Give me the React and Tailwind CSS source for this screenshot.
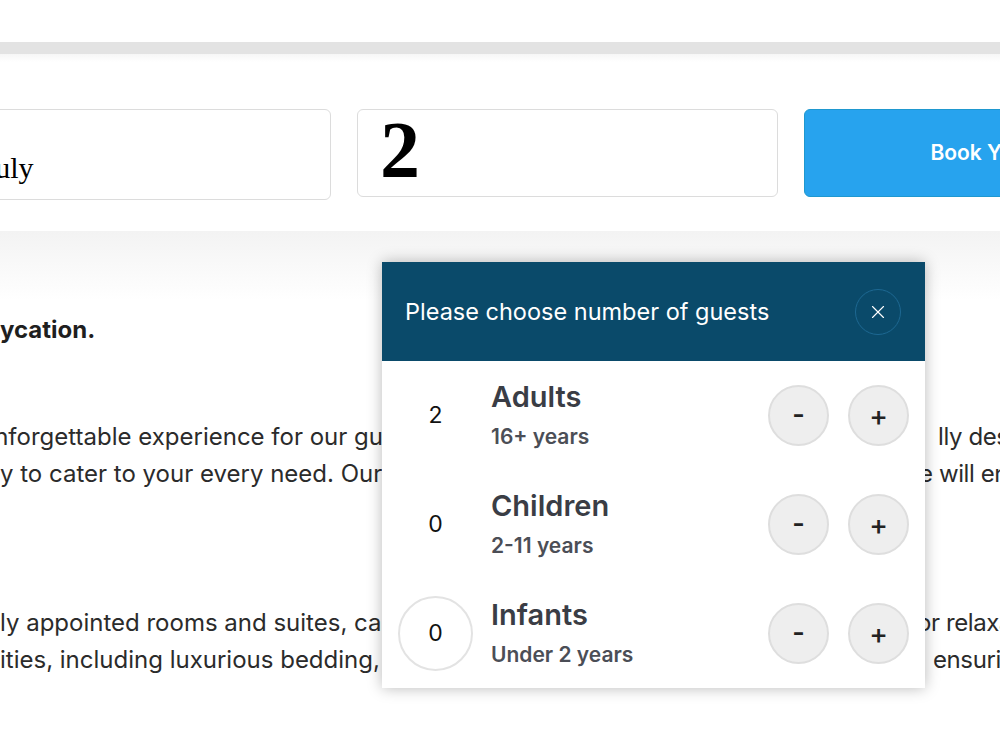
import React, { useState } from 'react';
import { X } from 'lucide-react';

const guestRows = [
    { key: 'adults', label: 'Adults', note: '16+ years' },
    { key: 'children', label: 'Children', note: '2-11 years' },
    { key: 'infants', label: 'Infants', note: 'Under 2 years' },
];

const GuestPicker = () => {
    const [counts, setCounts] = useState({ adults: 2, children: 0, infants: 0 });

    const change = (key, delta) =>
        setCounts(prev => ({ ...prev, [key]: Math.max(0, prev[key] + delta) }));

    return (
        <div className="absolute left-[382px] top-[262px] z-10 w-[543px] bg-white shadow-[0_0_14px_rgba(0,0,0,0.28)]">
            <div className="flex h-[99px] items-center justify-between bg-[#0a4a6a] pl-[23px] pr-[24px]">
                <h3 className="text-[23.5px] text-white">Please choose number of guests</h3>
                <button className="flex h-[46px] w-[46px] items-center justify-center rounded-full border border-[#1d6892] text-white">
                    <X size={22} strokeWidth={1.25} />
                </button>
            </div>

            <div>
                {guestRows.map(row => (
                    <div key={row.key} className="flex h-[109px] items-center pl-[16px] pr-[16px]">
                        <div className={`flex h-[75px] w-[75px] shrink-0 items-center justify-center rounded-full text-[23px] text-[#111] ${row.key === 'infants' ? 'border-2 border-[#e3e3e3]' : ''}`}>
                            {counts[row.key]}
                        </div>
                        <div className="ml-[18px] flex-1 pb-[2px]">
                            <div className="text-[29px] font-semibold leading-[34px] text-[#3a3d45]">{row.label}</div>
                            <div className="mt-[10px] text-[21px] font-semibold leading-[26px] text-[#4b4e56]">{row.note}</div>
                        </div>
                        <div className="flex gap-[19px]">
                            <button
                                onClick={() => change(row.key, -1)}
                                className="flex h-[61px] w-[61px] items-center justify-center rounded-full border-2 border-[#dedede] bg-[#eeeeee] text-[27px] font-semibold text-[#222]"
                            >
                                -
                            </button>
                            <button
                                onClick={() => change(row.key, 1)}
                                className="flex h-[61px] w-[61px] items-center justify-center rounded-full border-2 border-[#dedede] bg-[#eeeeee] text-[28px] font-medium text-[#222]"
                            >
                                +
                            </button>
                        </div>
                    </div>
                ))}
            </div>
        </div>
    );
};

const TextLine = ({ left, right, rightAt, cut = 0 }) => (
    <div className="flex h-[37px] items-center whitespace-nowrap">
        <div className="shrink-0 overflow-hidden" style={{ width: rightAt }}>
            <span className="block" style={{ marginLeft: -cut }}>{left}</span>
        </div>
        <span className="tracking-[-0.4px]">{right}</span>
    </div>
);

const App = () => {
    return (
        <div className="relative h-[750px] w-[1000px] overflow-hidden bg-white font-['Inter',sans-serif]">
            <div className="h-[42px] bg-white" />
            <div className="h-[12px] bg-[#e3e3e3]" />
            <div className="h-[8px] bg-gradient-to-b from-[#f6f6f6] to-white" />

            {/* booking bar */}
            <div className="flex h-[169px] items-start gap-[26px] pt-[47px] ml-[-90px]">
                <div className="flex h-[91px] w-[421px] shrink-0 items-end overflow-hidden rounded-[6px] border border-[#dcdcdc] bg-white pb-[16px]">
                    <span className="font-['Liberation_Serif',serif] text-[30px] leading-none text-black">Early July</span>
                </div>
                <div className="flex h-[88px] w-[421px] shrink-0 items-center rounded-[6px] border border-[#dcdcdc] bg-white pl-[22px]">
                    <span className="mt-[-6px] font-['Liberation_Serif',serif] text-[80px] font-bold leading-none text-black">2</span>
                </div>
                <button className="flex h-[88px] w-[421px] shrink-0 items-center justify-center rounded-[6px] border border-[#1f98cf] bg-[#27a3ee] pr-[14px] text-[21px] font-semibold text-white">
                    Book Your Stay
                </button>
            </div>

            <div className="h-[70px] bg-gradient-to-b from-[#f3f3f3] to-white" />

            {/* intro copy */}
            <div className="text-[24px] text-[#2b2b2b]">
                <div className="mt-[10px] h-[37px] whitespace-nowrap font-bold leading-[37px] text-[#1f1f1f]">ycation.</div>

                <div className="mt-[70px]">
                    <TextLine cut={20} left="unforgettable experience for our guests. Every room is" rightAt={938} right="lly designed" />
                    <TextLine left="y to cater to your every need. Our friendly staff" rightAt={919} right="e will ensure" />
                </div>

                <div className="mt-[112px]">
                    <TextLine left="ly appointed rooms and suites, carefully designed" rightAt={917} right="or relaxation" />
                    <TextLine left="ities, including luxurious bedding, linens" rightAt={933} right="ensuring" />
                </div>
            </div>

            <GuestPicker />
        </div>
    );
};

export default App;
